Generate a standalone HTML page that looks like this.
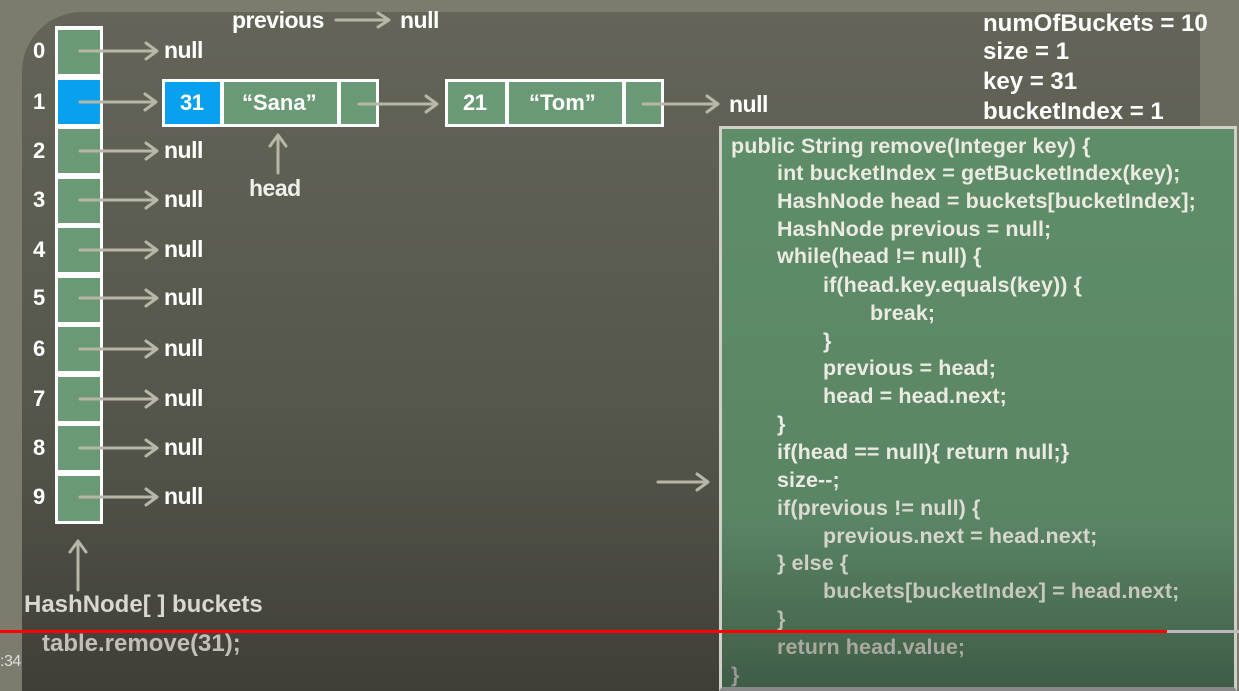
<!DOCTYPE html>
<html><head><meta charset="utf-8"><style>
*{margin:0;padding:0;box-sizing:border-box}
body{width:1239px;height:691px;overflow:hidden;background:#7b7b6e;font-family:"Liberation Sans",sans-serif;position:relative}
.slide{position:absolute;left:22px;top:12px;width:1178px;height:679px;border-top-left-radius:60px;background:linear-gradient(#646558,#55564b 60%,#3f3f38);}
.t{position:absolute;color:#fff;font-weight:bold;font-size:23px;letter-spacing:-0.5px;white-space:nowrap;line-height:1}
.cell{position:absolute;background:#6a9a75;border:3px solid #fff}
.code{position:absolute;left:719px;top:126px;width:518px;height:565px;background:linear-gradient(#5f8d69,#5a8565 70%,#3f5c46);border:3px solid #d0d0c8;border-bottom:4px solid #888}
.c{position:absolute;color:#ecebe2;font-size:21.5px;font-weight:bold;letter-spacing:0.1px;white-space:nowrap;line-height:1}
</style></head><body>
<div class="slide"></div>
<div style="position:absolute;left:55px;top:26px;width:48px;height:498px;background:#fff"></div>
<div id="b"></div>
<div class="t" style="left:232px;top:9px">previous</div>
<div class="t" style="left:400px;top:9px">null</div>
<div class="t" style="left:249px;top:177px;color:#f0f0ea">head</div>
<div class="t" style="left:24px;top:593px;color:#d8d8d0;font-size:24px;letter-spacing:0">HashNode[ ] buckets</div>
<div class="t" style="left:42px;top:632px;color:#c0c0b8;font-size:24px;letter-spacing:0">table.remove(31);</div>
<div class="t" style="left:0px;top:654px;color:#ddd;font-weight:normal;font-size:16px">:34</div>
<div style="position:absolute;left:162px;top:79px;width:217px;height:48px;background:#fff"></div>
<div style="position:absolute;left:165px;top:82px;width:55px;height:42px;background:#09a0ee"></div>
<div style="position:absolute;left:224px;top:82px;width:113px;height:42px;background:#6a9a75"></div>
<div style="position:absolute;left:341px;top:82px;width:35px;height:42px;background:#6a9a75"></div>
<div class="t" style="left:180px;top:92px;font-size:22px">31</div>
<div class="t" style="left:242px;top:92px;font-size:22px;letter-spacing:0">“Sana”</div>
<div style="position:absolute;left:445px;top:79px;width:219px;height:48px;background:#fff"></div>
<div style="position:absolute;left:448px;top:82px;width:57px;height:42px;background:#6a9a75"></div>
<div style="position:absolute;left:509px;top:82px;width:113px;height:42px;background:#6a9a75"></div>
<div style="position:absolute;left:626px;top:82px;width:35px;height:42px;background:#6a9a75"></div>
<div class="t" style="left:463px;top:92px;font-size:22px">21</div>
<div class="t" style="left:529px;top:92px;font-size:22px;letter-spacing:0">“Tom”</div>
<div class="t" style="left:729px;top:93px">null</div>
<div class="t" style="left:983px;top:12px;font-size:24px;letter-spacing:0">numOfBuckets = 10</div>
<div class="t" style="left:983px;top:40px;font-size:24px;letter-spacing:0">size = 1</div>
<div class="t" style="left:983px;top:70px;font-size:24px;letter-spacing:0">key = 31</div>
<div class="t" style="left:983px;top:100px;font-size:24px;letter-spacing:0">bucketIndex = 1</div>
<svg style="position:absolute;left:0;top:0" width="1239" height="691" fill="none" stroke="#b8b6a8" stroke-width="3" stroke-linecap="round" stroke-linejoin="round" id="arr">
<path d="M336 20H388M378 13L389 20L378 27"/>
<path d="M278 173V136M270 146L278 135L286 146"/>
<path d="M78 590V542M70 552L78 541L86 552"/>
<path d="M359 104H436M426 96L437 104L426 112"/>
<path d="M643 104H717M707 96L718 104L707 112"/>
<path d="M658 482H707M697 474L708 482L697 490"/>
</svg>
<div class="code">
<div class="c" style="left:9px;top:7px">public String remove(Integer key) {</div>
<div class="c" style="left:55px;top:34px">int bucketIndex = getBucketIndex(key);</div>
<div class="c" style="left:55px;top:62px">HashNode head = buckets[bucketIndex];</div>
<div class="c" style="left:55px;top:90px">HashNode previous = null;</div>
<div class="c" style="left:55px;top:117px">while(head != null) {</div>
<div class="c" style="left:101px;top:146px">if(head.key.equals(key)) {</div>
<div class="c" style="left:148px;top:174px">break;</div>
<div class="c" style="left:101px;top:202px">}</div>
<div class="c" style="left:101px;top:229px">previous = head;</div>
<div class="c" style="left:101px;top:257px">head = head.next;</div>
<div class="c" style="left:55px;top:285px">}</div>
<div class="c" style="left:55px;top:313px">if(head == null){ return null;}</div>
<div class="c" style="left:55px;top:341px">size--;</div>
<div class="c" style="left:55px;top:369px;color:#dcdcd2">if(previous != null) {</div>
<div class="c" style="left:101px;top:397px;color:#d6d6cc">previous.next = head.next;</div>
<div class="c" style="left:55px;top:424px;color:#d0d0c6">} else {</div>
<div class="c" style="left:101px;top:452px;color:#c8c8be">buckets[bucketIndex] = head.next;</div>
<div class="c" style="left:55px;top:480px;color:#bcbcb2">}</div>
<div class="c" style="left:55px;top:508px;color:#aaa9a0">return head.value;</div>
<div class="c" style="left:9px;top:536px;color:#999">}</div>
</div>
<div style="position:absolute;left:0;top:630px;width:1167px;height:3px;background:#f00"></div>
<div style="position:absolute;left:1167px;top:630px;width:72px;height:3px;background:#bbb"></div>
<script>
var tops=[27,77,126,176,225,275,324,374,423,473],lab=[51,102,151,200,250,298,349,399,448,497];
var h='',s='';
for(var i=0;i<10;i++){
h+='<div class="cell" style="left:55px;top:'+tops[i]+'px;width:48px;height:'+(i==9?51:50)+'px;'+(i==1?'background:#09a0ee':'')+'"></div>';
h+='<div class="t" style="left:33px;top:'+(lab[i]-11)+'px;font-size:22px">'+i+'</div>';
if(i!=1)h+='<div class="t" style="left:164px;top:'+(lab[i]-12)+'px">null</div>';
var y=lab[i];var e=i==1?155:156;
s+='<path d="M80 '+y+'H'+e+'M'+(e-10)+' '+(y-8)+'L'+(e+1)+' '+y+'L'+(e-10)+' '+(y+8)+'"/>';
}
document.getElementById('b').outerHTML=h;
document.getElementById('arr').innerHTML+=s;
</script>
</body></html>
